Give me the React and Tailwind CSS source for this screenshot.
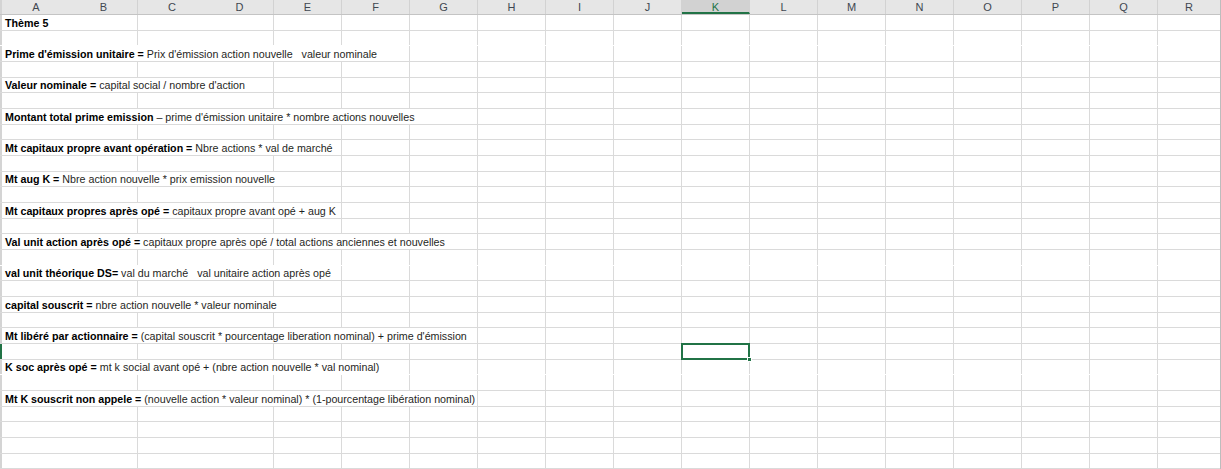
const COLS = 'ABCDEFGHIJKLMNOPQR'.split('');
const HIDDEN_V = [0, 2]; // vertical gridlines lost after A and C
const ROW_COUNT = 29;
const NO_BOTTOM = [2, 16, 23]; // horizontal gridlines not drawn
const SELECTED = { row: 22, col: 10 };

const LINES = {
  1: { b: 'Thème 5', t: '', span: 1 },
  3: { b: "Prime d'émission unitaire =", t: " Prix d'émission action nouvelle \u00a0\u00a0valeur nominale", span: 6 },
  5: { b: 'Valeur nominale =', t: " capital social / nombre d'action", span: 4 },
  7: { b: 'Montant total prime emission', t: " \u2013 prime d'émission unitaire * nombre actions nouvelles", span: 7 },
  9: { b: 'Mt capitaux propre avant opération =', t: ' Nbre actions * val de marché', span: 5 },
  11: { b: 'Mt aug K =', t: ' Nbre action nouvelle * prix emission nouvelle', span: 5 },
  13: { b: 'Mt capitaux propres après opé =', t: ' capitaux propre avant opé + aug K', span: 5 },
  15: { b: 'Val unit action après opé =', t: ' capitaux propre après opé / total actions anciennes et nouvelles', span: 7 },
  17: { b: 'val unit théorique DS=', t: ' val du marché \u00a0\u00a0val unitaire action après opé', span: 5 },
  19: { b: 'capital souscrit =', t: ' nbre action nouvelle * valeur nominale', span: 5 },
  21: { b: 'Mt libéré par actionnaire =', t: " (capital souscrit * pourcentage liberation nominal) + prime d'émission", span: 7 },
  23: { b: 'K soc après opé =', t: ' mt k social avant opé + (nbre action nouvelle * val nominal)', span: 6 },
  25: { b: 'Mt K souscrit non appele =', t: ' (nouvelle action * valeur nominal) * (1-pourcentage libération nominal)', span: 7 },
};

function HeaderRow() {
  return (
    <div className="flex h-[15px] bg-[#e6e6e6] border-b border-[#c4c4c4]">
      <div className="w-[2px] shrink-0 bg-[#d4d4d4]" />
      {COLS.map((c, i) => {
        const active = i === SELECTED.col;
        const last = i === COLS.length - 1;
        return (
          <div
            key={c}
            className={`${last ? 'flex-1' : 'w-[68px] shrink-0'} h-full text-center text-[11px] leading-[14px] ${
              HIDDEN_V.includes(i) || last ? '' : 'border-r border-[#d2d2d2]'
            } ${active ? 'bg-[#d2d2d2] text-[#217346] border-b-2 border-b-[#217346]' : 'text-[#3f4650]'}`}
          >
            {c}
          </div>
        );
      })}
    </div>
  );
}

function Row({ n }) {
  const line = LINES[n];
  const h = n % 3 === 2 ? 'h-[15px]' : 'h-[16px]';
  return (
    <div className={`flex ${h} border-b ${NO_BOTTOM.includes(n) ? 'border-transparent' : 'border-[#dadada]'}`}>
      <div className={`w-[2px] shrink-0 ${n === SELECTED.row ? 'bg-[#217346]' : 'bg-[#d4d4d4]'}`} />
      {COLS.map((c, i) => {
        const last = i === COLS.length - 1;
        const covered = line && i < line.span - 1;
        const sel = n === SELECTED.row && i === SELECTED.col;
        return (
          <div
            key={c}
            className={`relative ${last ? 'flex-1' : 'w-[68px] shrink-0'} h-full ${
              HIDDEN_V.includes(i) || covered || last ? '' : 'border-r border-[#dadada]'
            }`}
          >
            {line && i === 0 && (
              <div className="absolute left-[3px] -bottom-[1px] whitespace-nowrap text-[10.7px] leading-[15px] text-[#1f1f24] z-10">
                <span className="font-bold text-black">{line.b}</span>
                {line.t}
              </div>
            )}
            {sel && (
              <div className="absolute -left-[1px] -top-[1px] -right-[1px] -bottom-[1px] border-2 border-[#217346] z-20">
                <div className="absolute -right-[4px] -bottom-[4px] w-[5px] h-[5px] bg-[#217346] border border-white" />
              </div>
            )}
          </div>
        );
      })}
    </div>
  );
}

export default function App() {
  const rows = Array.from({ length: ROW_COUNT }, (_, i) => i + 1);
  return (
    <div className="w-[1221px] h-[469px] overflow-hidden bg-white border-r border-[#bdbdbd] font-['Liberation_Sans',Arial,sans-serif]">
      <HeaderRow />
      {rows.map((n) => (
        <Row key={n} n={n} />
      ))}
    </div>
  );
}
